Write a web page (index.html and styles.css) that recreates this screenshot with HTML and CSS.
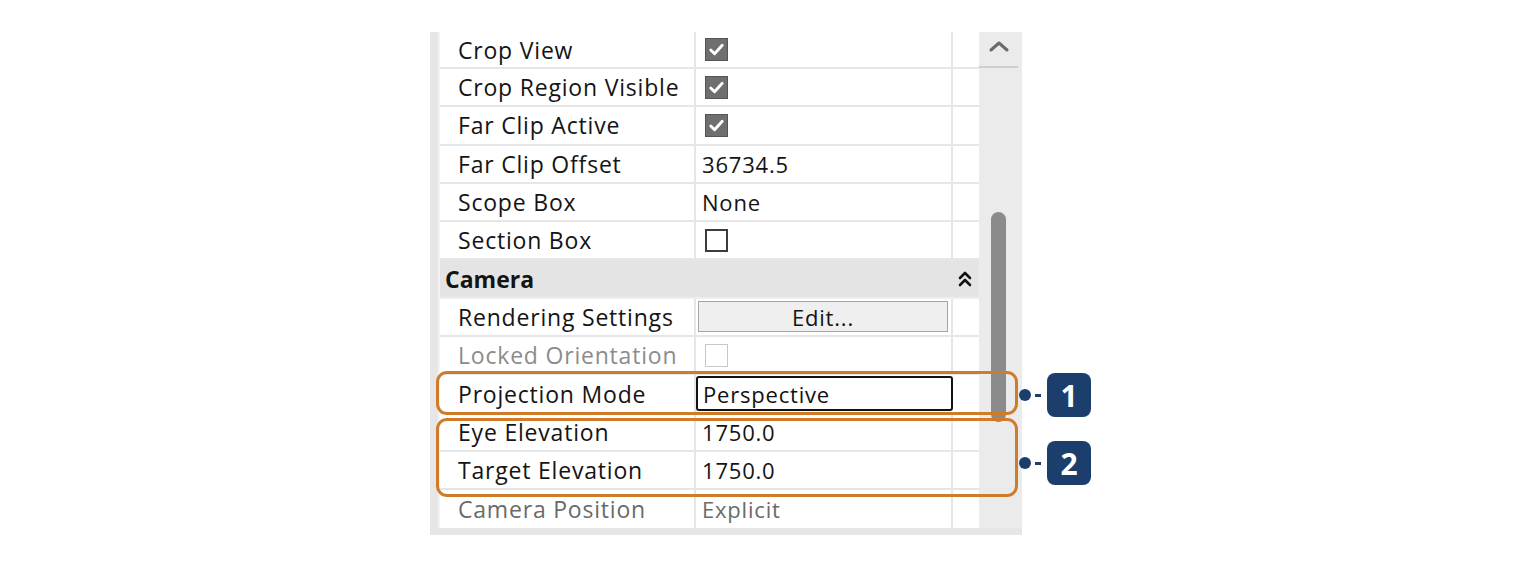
FILE: index.html
```html
<!DOCTYPE html>
<html>
<head>
<meta charset="utf-8">
<link rel="stylesheet" href="styles.css">
</head>
<body>
<div class="stage">
  <div class="panel">
    <div class="grid">
      <div class="row first"><div class="lbl">Crop View</div><div class="val"><span class="cb on"><svg viewBox="0 0 22 22"><path d="M5 11.5 L9 15.5 L17 6.5" /></svg></span></div><div class="pad"></div></div>
      <div class="row"><div class="lbl">Crop Region Visible</div><div class="val"><span class="cb on"><svg viewBox="0 0 22 22"><path d="M5 11.5 L9 15.5 L17 6.5" /></svg></span></div><div class="pad"></div></div>
      <div class="row"><div class="lbl">Far Clip Active</div><div class="val"><span class="cb on"><svg viewBox="0 0 22 22"><path d="M5 11.5 L9 15.5 L17 6.5" /></svg></span></div><div class="pad"></div></div>
      <div class="row"><div class="lbl">Far Clip Offset</div><div class="val">36734.5</div><div class="pad"></div></div>
      <div class="row"><div class="lbl">Scope Box</div><div class="val">None</div><div class="pad"></div></div>
      <div class="row"><div class="lbl">Section Box</div><div class="val"><span class="cb off"></span></div><div class="pad"></div></div>
      <div class="row header"><div class="hdr">Camera</div><div class="hicon"><svg viewBox="0 0 14 20" width="14" height="20"><path d="M2 9 L7 4 L12 9 M2 16 L7 11 L12 16" /></svg></div></div>
      <div class="row"><div class="lbl">Rendering Settings</div><div class="val btncell"><div class="btn">Edit...</div></div><div class="pad"></div></div>
      <div class="row"><div class="lbl dim">Locked Orientation</div><div class="val"><span class="cb dis"></span></div><div class="pad"></div></div>
      <div class="row"><div class="lbl">Projection Mode</div><div class="val fieldcell"><div class="field">Perspective</div></div><div class="pad"></div></div>
      <div class="row"><div class="lbl">Eye Elevation</div><div class="val">1750.0</div><div class="pad"></div></div>
      <div class="row"><div class="lbl">Target Elevation</div><div class="val">1750.0</div><div class="pad"></div></div>
      <div class="row last"><div class="lbl grey">Camera Position</div><div class="val grey">Explicit</div><div class="pad"></div></div>
    </div>
    <div class="scroll">
      <div class="sbtn"><svg viewBox="0 0 20 12" width="20" height="12"><path d="M2 10 L10 3 L18 10" /></svg></div>
      <div class="thumb"></div>
    </div>
  </div>
  <div class="callout c1"></div>
  <div class="callout c2"></div>
  <div class="marker m1"><span class="dot"></span><span class="dash"></span><span class="badge">1</span></div>
  <div class="marker m2"><span class="dot"></span><span class="dash"></span><span class="badge">2</span></div>
</div>
</body>
</html>
```

FILE: styles.css
```css
* { box-sizing: border-box; }
html, body { margin: 0; padding: 0; background: #ffffff; }
body { width: 1520px; height: 567px; overflow: hidden; font-family: "Open Sans", "Noto Sans", sans-serif; }

.stage { position: relative; width: 1520px; height: 567px; padding-top: 32px; padding-left: 430px; }

.panel {
  display: flex;
  width: 592px;
  height: 503px;
  background: #e6e6e6;
  padding-left: 8px;
  padding-bottom: 7px;
}

.grid {
  width: 541px;
  background: #ffffff;
  border-left: 2px solid #f3f3f3;
  overflow: hidden;
  display: flex;
  flex-direction: column;
}

.row {
  display: grid;
  grid-template-columns: 256px 257px 1fr;
  height: 38.3px;
  flex: none;
  border-bottom: 2px solid #e6e6e6;
  font-size: 22px;
  letter-spacing: 0.8px;
  color: #141414;
}
.row.first { height: 37px; }
.row.last { border-bottom: none; }

.lbl, .val {
  display: flex;
  align-items: center;
  border-right: 2px solid #e6e6e6;
  white-space: nowrap;
}
.lbl { padding-left: 18px; font-size: 23px; letter-spacing: 0.8px; }
.val { padding-left: 6px; }
.dim { color: #8c8c8c; }
.grey { color: #6a6a6a; }

.cb {
  display: block;
  width: 23px;
  height: 23px;
  margin-left: 3px;
}
.cb svg { display: block; width: 100%; height: 100%; }
.cb svg path { fill: none; stroke: #ffffff; stroke-width: 3; stroke-linecap: round; stroke-linejoin: round; }
.cb.on { background: #6f6f6f; border: 1px solid #555555; }
.cb.off { border: 2px solid #3c3c3c; background: #fff; }
.cb.dis { border: 1px solid #c8c8c8; background: #fff; }

.header {
  display: flex;
  justify-content: space-between;
  align-items: center;
  background: #e4e4e4;
  border-bottom: 2px solid #eeeeee;
}
.hdr { padding-left: 5px; font-weight: 700; font-size: 23px; letter-spacing: 0; color: #141414; }
.hicon { width: 26px; display: flex; justify-content: center; padding-right: 2px; }
.hicon svg path { fill: none; stroke: #111; stroke-width: 2.6; stroke-linecap: round; stroke-linejoin: round; }

.btncell { padding-left: 2px; padding-right: 3px; }
.btn {
  width: 250px;
  height: 31px;
  background: #efefef;
  border: 1px solid #a5a5a5;
  display: flex;
  align-items: center;
  justify-content: center;
  color: #141414;
}

.fieldcell { padding-left: 0; border-right: none; }
.field {
  width: 258px;
  height: 35px;
  border: 2px solid #111111;
  border-radius: 3px;
  background: #fff;
  padding-left: 5px;
  display: flex;
  align-items: center;
  color: #111;
  position: relative;
  z-index: 1;
}

.pad { background: #ffffff; }

.scroll {
  width: 43px;
  background: #ebebeb;
  display: flex;
  flex-direction: column;
}
.sbtn {
  height: 36px;
  margin-right: 4px;
  border-bottom: 2px solid #cfcfcf;
  display: flex;
  align-items: center;
  justify-content: center;
  padding-bottom: 6px;
}
.sbtn svg path { fill: none; stroke: #6a6a6a; stroke-width: 3; stroke-linecap: round; stroke-linejoin: round; }
.thumb {
  width: 15px;
  height: 210px;
  margin-top: 144px;
  margin-left: 12px;
  background: #8b8b8b;
  border-radius: 8px;
}

.callout {
  position: absolute;
  left: 436px;
  width: 582px;
  border: 3px solid #d07b2a;
  border-radius: 11px;
  z-index: 2;
}
.c1 { top: 371px; height: 44px; }
.c2 { top: 418px; height: 79px; }

.marker {
  position: absolute;
  left: 1019px;
  display: flex;
  align-items: center;
  z-index: 3;
}
.m1 { top: 373px; }
.m2 { top: 441px; }
.dot { width: 12px; height: 12px; border-radius: 50%; background: #1b3e6d; }
.dash { width: 6px; height: 3px; background: #1b3e6d; margin-left: 4px; margin-right: 6px; }
.badge {
  width: 44px;
  height: 44px;
  border-radius: 8px;
  background: #1b3e6d;
  color: #ffffff;
  font-family: "Open Sans", sans-serif;
  font-weight: 700;
  font-size: 30px;
  display: flex;
  align-items: center;
  justify-content: center;
}
```
